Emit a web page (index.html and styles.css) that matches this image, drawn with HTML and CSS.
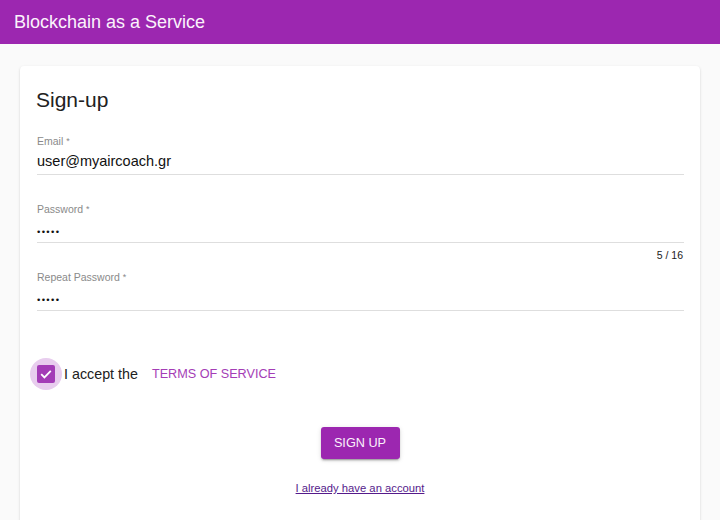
FILE: index.html
```html
<!DOCTYPE html>
<html>
<head>
<meta charset="utf-8">
<link rel="stylesheet" href="styles.css">
</head>
<body>
<div class="app">
  <header class="toolbar">Blockchain as a Service</header>
  <main class="main">
    <section class="card">
      <h1 class="title">Sign-up</h1>
      <div class="field">
        <div class="label">Email <span class="req">*</span></div>
        <div class="input">user@myaircoach.gr</div>
        <div class="sub"></div>
      </div>
      <div class="field">
        <div class="label">Password <span class="req">*</span></div>
        <div class="input dots">•••••</div>
        <div class="sub"><span class="hint">5 / 16</span></div>
      </div>
      <div class="field">
        <div class="label">Repeat Password <span class="req">*</span></div>
        <div class="input dots">•••••</div>
        <div class="sub"></div>
      </div>
      <div class="check-row">
        <span class="checkbox">
          <span class="ripple"></span>
          <span class="box">
            <svg viewBox="0 0 18 18" width="18" height="18"><path d="M4.2 9.2l3.2 3.2 6.4-6.6" fill="none" stroke="#fff" stroke-width="1.8"/></svg>
          </span>
        </span>
        <span class="accept">I accept the</span>
        <span class="terms">TERMS OF SERVICE</span>
      </div>
      <div class="actions">
        <button class="btn">SIGN UP</button>
      </div>
      <div class="links">
        <a class="login" href="#">I already have an account</a>
      </div>
    </section>
  </main>
</div>
</body>
</html>
```

FILE: styles.css
```css
html, body {
  margin: 0;
  padding: 0;
  overflow: hidden;
  background: #ffffff;
  font-family: "Liberation Sans", Arial, sans-serif;
}

.app {
  width: 720px;
  height: 520px;
  background: #fafafa;
  display: flex;
  flex-direction: column;
}

.toolbar {
  height: 44px;
  line-height: 44px;
  background: #9c27b0;
  color: #fbf3fc;
  font-size: 18px;
  padding-left: 14px;
  flex: none;
}

.main {
  padding: 22px 20px 0 20px;
  flex: 1;
  overflow: hidden;
}

.card {
  background: #fff;
  border-radius: 4px;
  box-shadow: 0 2px 1px -1px rgba(0,0,0,.2), 0 1px 1px 0 rgba(0,0,0,.14), 0 1px 3px 0 rgba(0,0,0,.12);
  padding: 20px 16px 40px 16px;
}

.title {
  margin: 0;
  font-size: 21px;
  font-weight: normal;
  line-height: 28px;
  color: #212121;
}

.field {
  margin-left: 1px;
}

.field:first-of-type {
  margin-top: 21px;
}

.label {
  font-size: 10.5px;
  line-height: 12px;
  color: #8a8a8a;
}

.req {
  font-size: 9px;
  vertical-align: 1px;
}

.input {
  margin-top: 4px;
  font-size: 14.5px;
  line-height: 20px;
  padding-bottom: 3px;
  border-bottom: 1px solid #dedede;
  color: #111;
}

.input.dots {
  font-size: 9.5px;
  letter-spacing: 1.35px;
  line-height: 20px;
  padding-top: 3px;
  padding-bottom: 0;
  height: 20px;
}

.sub {
  height: 28px;
  display: flex;
  justify-content: flex-end;
}

.hint {
  margin-top: 6px;
  margin-right: 1px;
  font-size: 10.5px;
  line-height: 12px;
  color: #212121;
}

.check-row {
  display: flex;
  align-items: center;
  height: 40px;
  margin-top: 15px;
}

.checkbox {
  position: relative;
  width: 36px;
  height: 36px;
  margin-left: -8px;
  display: flex;
  align-items: center;
  justify-content: center;
}

.ripple {
  position: absolute;
  left: 2px;
  top: 2px;
  width: 32px;
  height: 32px;
  border-radius: 50%;
  background: #e8cdee;
}

.box {
  position: relative;
  width: 18px;
  height: 18px;
  border-radius: 2px;
  background: #a33cb6;
  display: flex;
}

.accept {
  font-size: 14.3px;
  color: #212121;
}

.terms {
  margin-left: 14px;
  font-size: 12.65px;
  color: #a43db6;
}

.actions {
  display: flex;
  justify-content: center;
  margin-top: 33px;
}

.btn {
  width: 79px;
  height: 32px;
  border: none;
  border-radius: 3px;
  background: #9c27b0;
  color: #fbf2fc;
  font-family: "Liberation Sans", Arial, sans-serif;
  font-size: 12.7px;
  padding: 0;
  box-shadow: 0 3px 1px -2px rgba(0,0,0,.2), 0 2px 2px 0 rgba(0,0,0,.14), 0 1px 5px 0 rgba(0,0,0,.12);
}

.links {
  display: flex;
  justify-content: center;
  margin-top: 22px;
  line-height: 14px;
}

.login {
  font-size: 11.25px;
  color: #551a8b;
  text-decoration: underline;
}
```
